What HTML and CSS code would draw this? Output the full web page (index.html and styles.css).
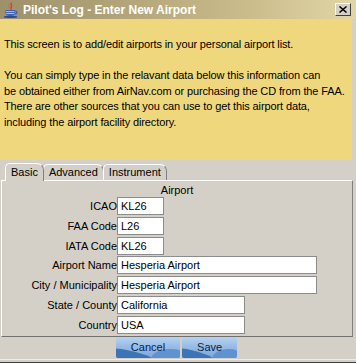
FILE: index.html
```html
<!DOCTYPE html>
<html>
<head>
<meta charset="utf-8">
<link rel="stylesheet" href="styles.css">
</head>
<body>
<div class="window">
  <div class="titlebar">
    <svg class="appicon" viewBox="0 0 16 16" width="16" height="16">
      <path d="M8.5 0.8 C6.3 2.4 10.2 3.6 8.1 5.4 C7 6.4 8.6 6.9 8.1 7.6" stroke="#d2401e" fill="none" stroke-width="1.3"/>
      <path d="M5.8 2.6 C4.9 3.6 6.9 4.6 5.9 6.2" stroke="#e26a30" fill="none" stroke-width="1"/>
      <path d="M2.5 8 H12 V10.5 C12 13 10 14 7.25 14 C4.5 14 2.5 13 2.5 10.5 Z" fill="#3d5fb4"/>
      <path d="M3 9.6 H11.5 M3.3 11.5 H11.2" stroke="#c8d4f0" stroke-width="0.8"/>
      <path d="M12 9 C14.6 9 14.6 12.2 11.6 12.2" stroke="#3d5fb4" fill="none" stroke-width="1.2"/>
      <ellipse cx="7.5" cy="14.9" rx="6.8" ry="1.1" fill="#2d4a9a"/>
    </svg>
    <span class="title">Pilot's Log - Enter New Airport</span>
    <div class="close">
      <svg viewBox="0 0 8 7" width="8" height="7">
        <path d="M0.5 0.5 L7.5 6.5 M7.5 0.5 L0.5 6.5" stroke="#000" stroke-width="1.5"/>
      </svg>
    </div>
  </div>

  <div class="info">
    <p class="line">This screen is to add/edit airports in your personal airport list.</p>
    <p class="line blank">&nbsp;</p>
    <p class="line">You can simply type in the relavant data below this information can</p>
    <p class="line">be obtained either from AirNav.com or purchasing the CD from the FAA.</p>
    <p class="line">There are other sources that you can use to get this airport data,</p>
    <p class="line">including the airport facility directory.</p>
  </div>

  <div class="tabarea">
    <div class="tabs">
      <div class="tab active">Basic</div>
      <div class="tab">Advanced</div>
      <div class="tab">Instrument</div>
    </div>
    <div class="panel">
      <div class="section">Airport</div>
      <div class="form">
        <span class="label">ICAO</span><div class="field w-s">KL26</div>
        <span class="label">FAA Code</span><div class="field w-s">L26</div>
        <span class="label">IATA Code</span><div class="field w-s">KL26</div>
        <span class="label">Airport Name</span><div class="field w-l">Hesperia Airport</div>
        <span class="label">City / Municipality</span><div class="field w-l">Hesperia Airport</div>
        <span class="label">State / County</span><div class="field w-m">California</div>
        <span class="label">Country</span><div class="field w-m">USA</div>
      </div>
    </div>
  </div>

  <div class="buttons">
    <div class="btn"><span>Cancel</span></div>
    <div class="btn"><span>Save</span></div>
  </div>
  <div class="frame-bottom"></div>
</div>
</body>
</html>
```

FILE: styles.css
```css
html, body {
  margin: 0;
  padding: 0;
}

body {
  width: 356px;
  height: 363px;
  overflow: hidden;
  background: #d4d0c8;
  font-family: "Liberation Sans", Arial, sans-serif;
  font-size: 11px;
  color: #000;
}

.window {
  display: flex;
  flex-direction: column;
  width: 356px;
  height: 363px;
}

/* Title bar */
.titlebar {
  height: 19px;
  display: flex;
  align-items: center;
  padding-left: 3px;
  background: linear-gradient(90deg, #9d906b 0%, #b3a579 35%, #cbbc8c 70%, #e2d6a6 100%);
}

.appicon {
  flex: none;
  margin-right: 4px;
}

.title {
  flex: 1;
  color: #fff;
  font-weight: bold;
  font-size: 12px;
  line-height: 19px;
  padding-top: 1px;
  white-space: nowrap;
}

.close {
  width: 16px;
  height: 13px;
  box-sizing: border-box;
  margin-right: 5px;
  background: #d4d0c8;
  border: 1px solid;
  border-color: #fff #404040 #404040 #fff;
  display: flex;
  align-items: center;
  justify-content: center;
}

/* Info area */
.info {
  height: 141px;
  box-sizing: border-box;
  margin-right: 4px;
  padding: 18px 0 0 4px;
  background: #efd77d;
}

.line {
  margin: 0;
  line-height: 15.5px;
  white-space: nowrap;
  letter-spacing: -0.12px;
}

/* Tabs */
.tabarea {
  padding-top: 3px;
  display: flex;
  flex-direction: column;
}

.tabs {
  display: flex;
  align-items: flex-end;
  padding-left: 5px;
  height: 17px;
}

.tab {
  position: relative;
  height: 15px;
  line-height: 15px;
  padding: 0 5px;
  margin-right: -1px;
  background: #d4d0c8;
  border: 1px solid;
  border-bottom: none;
  border-color: #fff #808080 #808080 #fff;
  border-radius: 5px 7px 0 0;
}

.tab.active {
  z-index: 1;
  height: 17px;
  line-height: 16px;
  margin-bottom: -1px;
  padding-bottom: 0;
}

.panel {
  height: 157px;
  box-sizing: border-box;
  margin: 0 3px 0 1px;
  border: 1px solid;
  border-color: #fff #808080 #707070 #fff;
}

.section {
  text-align: center;
  line-height: 14px;
  padding-top: 2px;
}

.form {
  display: grid;
  grid-template-columns: 115px auto;
  row-gap: 1.8px;
  align-items: center;
  justify-items: start;
}

.label {
  justify-self: end;
  line-height: 18px;
  white-space: nowrap;
}

.field {
  height: 18px;
  box-sizing: border-box;
  border: 1px solid #8c8c8c;
  background: #fff;
  padding: 0 3px;
  line-height: 16px;
  white-space: nowrap;
}

.w-s { width: 47px; }
.w-l { width: 200px; }
.w-m { width: 128px; }

/* Buttons */
.buttons {
  height: 22px;
  display: flex;
  justify-content: center;
  gap: 2px;
  padding-right: 3px;
}

.btn {
  position: relative;
  overflow: hidden;
  height: 21px;
  padding: 0 15px;
  border-radius: 2px;
  background: linear-gradient(180deg, #b7d2ef 0%, #98bce5 45%, #7aa7da 100%);
  color: #0c1c48;
  line-height: 21px;
}

.btn::before {
  content: "";
  position: absolute;
  left: -20%;
  top: 50%;
  width: 95%;
  height: 120%;
  background: #3d74b6;
  border-radius: 0 100% 0 0;
}

.btn::after {
  content: "";
  position: absolute;
  right: -15%;
  bottom: -55%;
  width: 60%;
  height: 100%;
  background: #5f93cf;
  border-radius: 50%;
}

.btn span {
  position: relative;
  z-index: 1;
}

.frame-bottom {
  height: 4px;
  box-sizing: border-box;
  border-top: 1px solid #eeece6;
  border-bottom: 1px solid #404040;
}
```
